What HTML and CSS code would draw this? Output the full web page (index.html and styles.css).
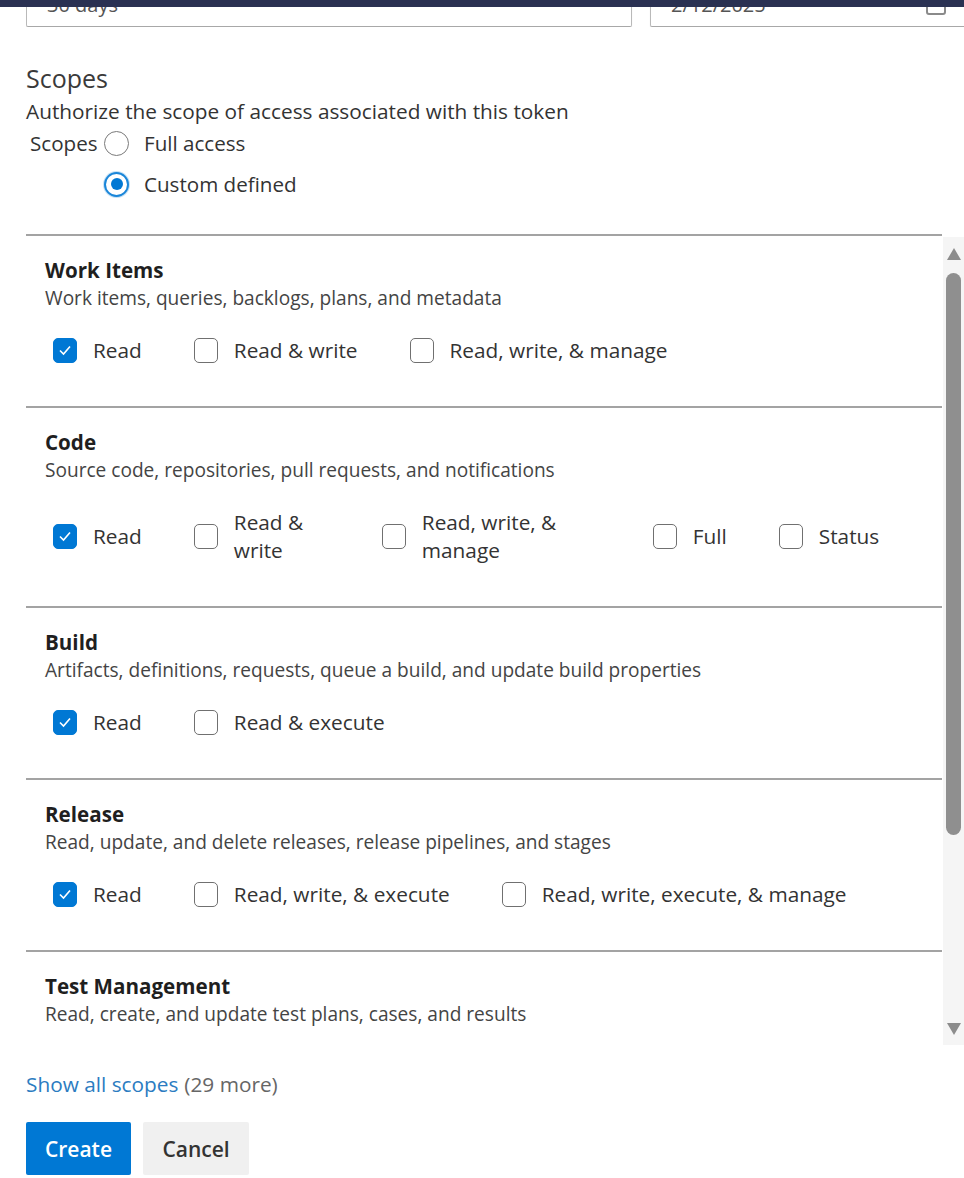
FILE: index.html
```html
<!DOCTYPE html>
<html lang="en">
<head>
<meta charset="utf-8">
<title>Scopes</title>
<link rel="stylesheet" href="styles.css">
</head>
<body>
<div class="topbar"></div>
<div class="page">
  <div class="fields">
    <div class="field field-exp"><span class="field-text">30 days</span></div>
    <div class="field field-date">
      <span class="field-text">2/12/2025</span>
      <svg class="cal-icon" width="20" height="20" viewBox="0 0 20 20"><rect x="1" y="3" width="18" height="16" rx="2" fill="none" stroke="#8a8a8a" stroke-width="2"/><rect x="1" y="3" width="18" height="5" fill="#8a8a8a"/></svg>
    </div>
  </div>

  <h2 class="title">Scopes</h2>
  <p class="subtitle">Authorize the scope of access associated with this token</p>

  <div class="radio-group">
    <span class="radio-label">Scopes</span>
    <div class="radio-options">
      <div class="radio"><span class="radio-circle"></span><span>Full access</span></div>
      <div class="radio"><span class="radio-circle checked"></span><span>Custom defined</span></div>
    </div>
  </div>

  <div class="scope-box">
    <div class="scope-list">
      <section class="scope">
        <h3 class="scope-name">Work Items</h3>
        <p class="scope-desc">Work items, queries, backlogs, plans, and metadata</p>
        <div class="options">
          <div class="opt"><span class="cb checked"><svg width="14" height="12" viewBox="0 0 14 12"><path d="M2 6.5 L5.5 10 L12 2.5" fill="none" stroke="#fff" stroke-width="1.6"/></svg></span><span class="opt-label">Read</span></div>
          <div class="opt"><span class="cb"></span><span class="opt-label">Read &amp; write</span></div>
          <div class="opt"><span class="cb"></span><span class="opt-label">Read, write, &amp; manage</span></div>
        </div>
      </section>

      <section class="scope">
        <h3 class="scope-name">Code</h3>
        <p class="scope-desc">Source code, repositories, pull requests, and notifications</p>
        <div class="options">
          <div class="opt"><span class="cb checked"><svg width="14" height="12" viewBox="0 0 14 12"><path d="M2 6.5 L5.5 10 L12 2.5" fill="none" stroke="#fff" stroke-width="1.6"/></svg></span><span class="opt-label">Read</span></div>
          <div class="opt"><span class="cb"></span><span class="opt-label wrap-sm">Read &amp; write</span></div>
          <div class="opt"><span class="cb"></span><span class="opt-label wrap-md">Read, write, &amp; manage</span></div>
          <div class="opt"><span class="cb"></span><span class="opt-label">Full</span></div>
          <div class="opt"><span class="cb"></span><span class="opt-label">Status</span></div>
        </div>
      </section>

      <section class="scope">
        <h3 class="scope-name">Build</h3>
        <p class="scope-desc">Artifacts, definitions, requests, queue a build, and update build properties</p>
        <div class="options">
          <div class="opt"><span class="cb checked"><svg width="14" height="12" viewBox="0 0 14 12"><path d="M2 6.5 L5.5 10 L12 2.5" fill="none" stroke="#fff" stroke-width="1.6"/></svg></span><span class="opt-label">Read</span></div>
          <div class="opt"><span class="cb"></span><span class="opt-label">Read &amp; execute</span></div>
        </div>
      </section>

      <section class="scope">
        <h3 class="scope-name">Release</h3>
        <p class="scope-desc">Read, update, and delete releases, release pipelines, and stages</p>
        <div class="options">
          <div class="opt"><span class="cb checked"><svg width="14" height="12" viewBox="0 0 14 12"><path d="M2 6.5 L5.5 10 L12 2.5" fill="none" stroke="#fff" stroke-width="1.6"/></svg></span><span class="opt-label">Read</span></div>
          <div class="opt"><span class="cb"></span><span class="opt-label">Read, write, &amp; execute</span></div>
          <div class="opt"><span class="cb"></span><span class="opt-label">Read, write, execute, &amp; manage</span></div>
        </div>
      </section>

      <section class="scope">
        <h3 class="scope-name">Test Management</h3>
        <p class="scope-desc">Read, create, and update test plans, cases, and results</p>
        <div class="options">
          <div class="opt"><span class="cb checked"><svg width="14" height="12" viewBox="0 0 14 12"><path d="M2 6.5 L5.5 10 L12 2.5" fill="none" stroke="#fff" stroke-width="1.6"/></svg></span><span class="opt-label">Read</span></div>
          <div class="opt"><span class="cb"></span><span class="opt-label">Read &amp; write</span></div>
        </div>
      </section>
    </div>
    <div class="scrollbar">
      <span class="arrow arrow-up"></span>
      <div class="thumb"></div>
      <span class="arrow arrow-down"></span>
    </div>
  </div>

  <p class="more"><a class="more-link" href="#">Show all scopes</a><span class="more-count">(29 more)</span></p>

  <div class="actions">
    <button class="btn btn-primary" type="button">Create</button>
    <button class="btn btn-secondary" type="button">Cancel</button>
  </div>
</div>
</body>
</html>
```

FILE: styles.css
```css
* { box-sizing: border-box; }

html, body {
  margin: 0;
  padding: 0;
  background: #ffffff;
  overflow: hidden;
}

body {
  font-family: "Open Sans", "Noto Sans", "Liberation Sans", sans-serif;
  color: #333333;
  width: 964px;
  height: 1178px;
}

.topbar {
  height: 7px;
  background: #2a3152;
}

.page {
  padding-left: 26px;
}

/* clipped date/expiry fields */
.fields {
  height: 20px;
  display: flex;
  align-items: flex-end;
  gap: 18px;
  overflow: hidden;
}

.field {
  flex: none;
  height: 37px;
  border: 1px solid #b9b9b9;
  border-bottom-color: #a8a8a8;
  border-radius: 2px;
  box-shadow: 0 1px 1px rgba(0,0,0,0.12);
  padding: 0 20px;
  display: flex;
  align-items: flex-start;
  justify-content: space-between;
}

.field-exp { width: 606px; }
.field-date { width: 340px; padding-right: 43px; }

.field-text {
  font-size: 20px;
  line-height: 28px;
  color: #555;
}

.cal-icon {
  margin-top: 4px;
}

.title {
  margin: 35px 0 0;
  font-size: 25px;
  line-height: 32px;
  font-weight: 400;
  color: #3a3a3a;
}

.subtitle {
  margin: 3px 0 0;
  font-size: 20.8px;
  line-height: 28px;
  color: #333;
}

.radio-group {
  margin-top: 4px;
  display: flex;
  align-items: flex-start;
}

.radio-label {
  margin-left: 4px;
  width: 74px;
  font-size: 20.6px;
  line-height: 28px;
  color: #333;
}

.radio-options {
  display: flex;
  flex-direction: column;
  gap: 13px;
}

.radio {
  display: flex;
  align-items: center;
  gap: 15px;
  font-size: 20.6px;
  line-height: 28px;
  color: #333;
}

.radio-circle {
  width: 25px;
  height: 25px;
  border-radius: 50%;
  border: 1.5px solid #7a7a7a;
  background: #fff;
  position: relative;
}

.radio-circle.checked {
  border: 2px solid #1a86d9;
  box-shadow: 0 0 0 1px rgba(26,134,217,0.25);
}

.radio-circle.checked::after {
  content: "";
  position: absolute;
  left: 4.5px;
  top: 4.5px;
  width: 12px;
  height: 12px;
  border-radius: 50%;
  background: #0078d4;
}

/* scopes scroll box */
.scope-box {
  margin-top: 36px;
  height: 811px;
  display: flex;
}

.scope-list {
  flex: 1;
  overflow: hidden;
}

.scope {
  border-top: 2px solid #a3a3a3;
  padding: 20px 0 42px 19px;
}

.scope-name {
  margin: 0;
  font-size: 20.6px;
  line-height: 28px;
  font-weight: 700;
  color: #1f1f1f;
}

.scope-desc {
  margin: 0;
  font-size: 19.1px;
  line-height: 28px;
  color: #444;
}

.options {
  margin-top: 24px;
  padding-left: 8px;
  display: flex;
  align-items: center;
  gap: 52px;
}

.opt {
  display: flex;
  align-items: center;
  gap: 16px;
}

.opt-label {
  font-size: 20.8px;
  line-height: 28px;
  color: #333;
}

.opt-label.wrap-sm { width: 96px; }
.opt-label.wrap-md { width: 179px; }

.cb {
  flex: none;
  width: 24px;
  height: 25px;
  border: 1.5px solid #707070;
  border-radius: 5px;
  background: #fff;
  display: flex;
  align-items: center;
  justify-content: center;
}

.cb.checked {
  border-color: #0078d4;
  background: #0078d4;
}

.scrollbar {
  flex: none;
  width: 21px;
  margin-left: 1px;
  margin-top: 3px;
  background: #f5f5f5;
  display: flex;
  flex-direction: column;
  align-items: center;
}

.arrow {
  width: 0;
  height: 0;
  border-left: 7.5px solid transparent;
  border-right: 7.5px solid transparent;
}

.arrow-up {
  margin-top: 11px;
  border-bottom: 12px solid #8c8c8c;
}

.thumb {
  margin-top: 13px;
  width: 15px;
  height: 562px;
  border-radius: 8px;
  background: #8f8f8f;
}

.arrow-down {
  margin-top: auto;
  margin-bottom: 10px;
  border-top: 12px solid #8c8c8c;
}

.more {
  margin: 25px 0 0;
  font-size: 20.8px;
  line-height: 28px;
  display: flex;
  gap: 6px;
}

.more-link {
  color: #2b7cc1;
  text-decoration: none;
}

.more-count {
  color: #666;
}

.actions {
  margin-top: 24px;
  display: flex;
  gap: 12px;
}

.btn {
  height: 53px;
  width: 105px;
  border: none;
  border-radius: 2px;
  font-family: inherit;
  font-size: 21px;
  font-weight: 600;
  padding: 0;
}

.btn-primary {
  background: #0078d4;
  color: #fff;
}

.btn-secondary {
  width: 106px;
  background: #f0f0f0;
  color: #333;
}
```
